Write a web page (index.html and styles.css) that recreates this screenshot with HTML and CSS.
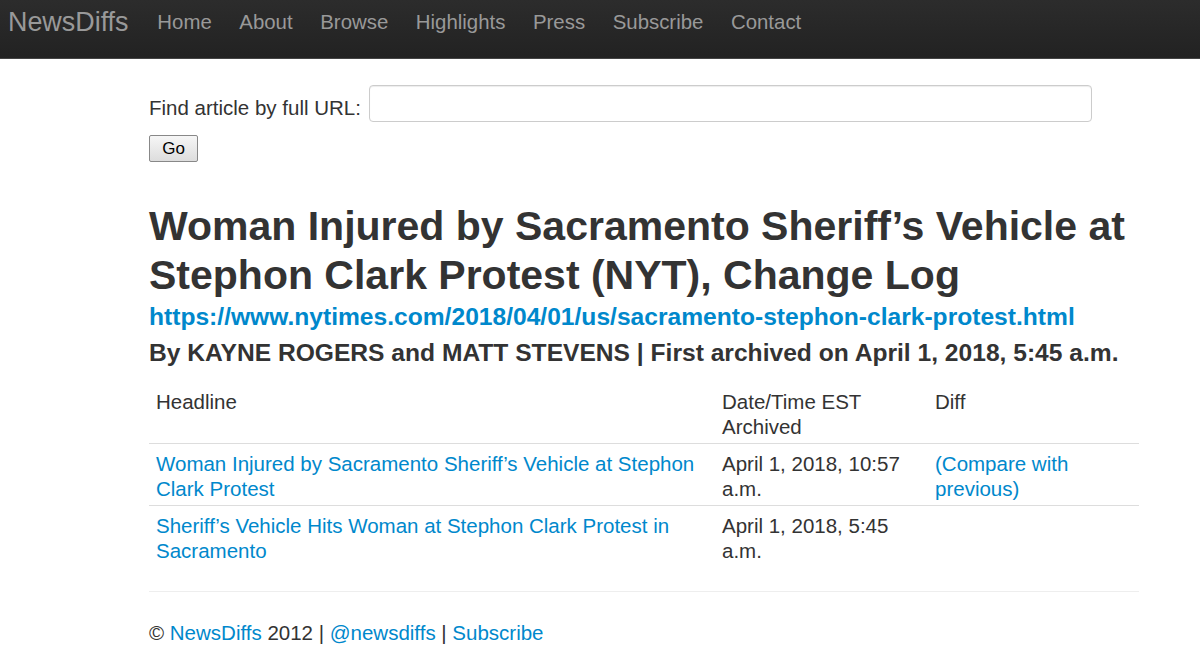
FILE: index.html
```html
<!DOCTYPE html>
<html>
<head>
<meta charset="utf-8">
<link rel="stylesheet" href="styles.css">
</head>
<body>
<div class="navbar">
  <a class="brand" href="#">NewsDiffs</a>
  <ul class="nav">
    <li><a href="#">Home</a></li>
    <li><a href="#">About</a></li>
    <li><a href="#">Browse</a></li>
    <li><a href="#">Highlights</a></li>
    <li><a href="#">Press</a></li>
    <li><a href="#">Subscribe</a></li>
    <li><a href="#">Contact</a></li>
  </ul>
</div>
<div class="container">
  <form class="search">
    <div class="search-row">
      <label class="search-label">Find article by full URL:</label>
      <input class="search-input" type="text">
    </div>
    <button class="go" type="button">Go</button>
  </form>
  <h1 class="title">Woman Injured by Sacramento Sheriff’s Vehicle at Stephon Clark Protest (NYT), Change Log</h1>
  <h3 class="url"><a href="#">https://www.nytimes.com/2018/04/01/us/sacramento-stephon-clark-protest.html</a></h3>
  <h3 class="byline">By KAYNE ROGERS and MATT STEVENS | First archived on April 1, 2018, 5:45 a.m.</h3>
  <table class="log">
    <thead>
      <tr><th class="c1">Headline</th><th class="c2">Date/Time EST Archived</th><th class="c3">Diff</th></tr>
    </thead>
    <tbody>
      <tr><td><a href="#">Woman Injured by Sacramento Sheriff’s Vehicle at Stephon Clark Protest</a></td><td>April 1, 2018, 10:57 a.m.</td><td><a href="#">(Compare with previous)</a></td></tr>
      <tr><td><a href="#">Sheriff’s Vehicle Hits Woman at Stephon Clark Protest in Sacramento</a></td><td>April 1, 2018, 5:45 a.m.</td><td></td></tr>
    </tbody>
  </table>
  <hr class="rule">
  <footer class="footer">© <a href="#">NewsDiffs</a> 2012 | <a href="#">@newsdiffs</a> | <a href="#">Subscribe</a></footer>
</div>
</body>
</html>
```
FILE: styles.css
```css
* { box-sizing: border-box; }
body {
  margin: 0;
  font-family: "Liberation Sans", Arial, sans-serif;
  font-size: 20.5px;
  line-height: 25px;
  color: #333;
  background: #fff;
}
a { color: #0088cc; text-decoration: none; }
.navbar {
  height: 59px;
  background: linear-gradient(to bottom, #2c2c2c, #222);
  border-bottom: 1px solid #444;
  display: flex;
  align-items: center;
  padding-left: 8px;
}
.brand {
  color: #999;
  font-size: 26.9px;
  margin-right: 15px;
  padding-bottom: 14px;
}
.nav { list-style: none; margin: 0; padding: 0; display: flex; padding-bottom: 14px; }
.nav a { color: #999; font-size: 20.4px; padding: 0 13.8px; display: block; }
.container { width: 990px; margin-left: 149px; }
.search { padding-top: 26px; }
.search-row { display: flex; align-items: center; }
.search-label { margin-right: 8px; padding-top: 8px; }
.search-input {
  width: 723px;
  height: 37px;
  border: 1px solid #ccc;
  border-radius: 4px;
  box-shadow: inset 0 1px 1px rgba(0,0,0,0.075);
}
.go {
  margin-top: 13px;
  width: 49px;
  height: 27px;
  font-family: "Liberation Sans", Arial, sans-serif;
  font-size: 17px;
  color: #000;
  border: 1px solid #888;
  border-radius: 2px;
  background: linear-gradient(to bottom, #f6f6f6, #dddddd);
  padding: 0;
}
.title {
  margin: 40px 0 0;
  font-size: 41px;
  line-height: 49px;
  font-weight: bold;
  color: #333;
}
.url { margin: 1px 0 0; font-size: 24.6px; line-height: 32px; font-weight: bold; }
.byline { margin: 4px 0 0; font-size: 24.6px; line-height: 32px; font-weight: bold; color: #333; }
.log { width: 990px; border-collapse: collapse; margin-top: 8px; }
.log th, .log td {
  text-align: left;
  vertical-align: top;
  font-weight: normal;
  padding: 12px 7px 4px;
}
.log td { border-top: 1px solid #ddd; padding-top: 7px; padding-bottom: 4px; }
.c1 { width: 566px; }
.c2 { width: 213px; }
.rule { margin: 24px 0 0; border: 0; border-top: 1px solid #eee; }
.footer { padding-top: 28px; }
```
